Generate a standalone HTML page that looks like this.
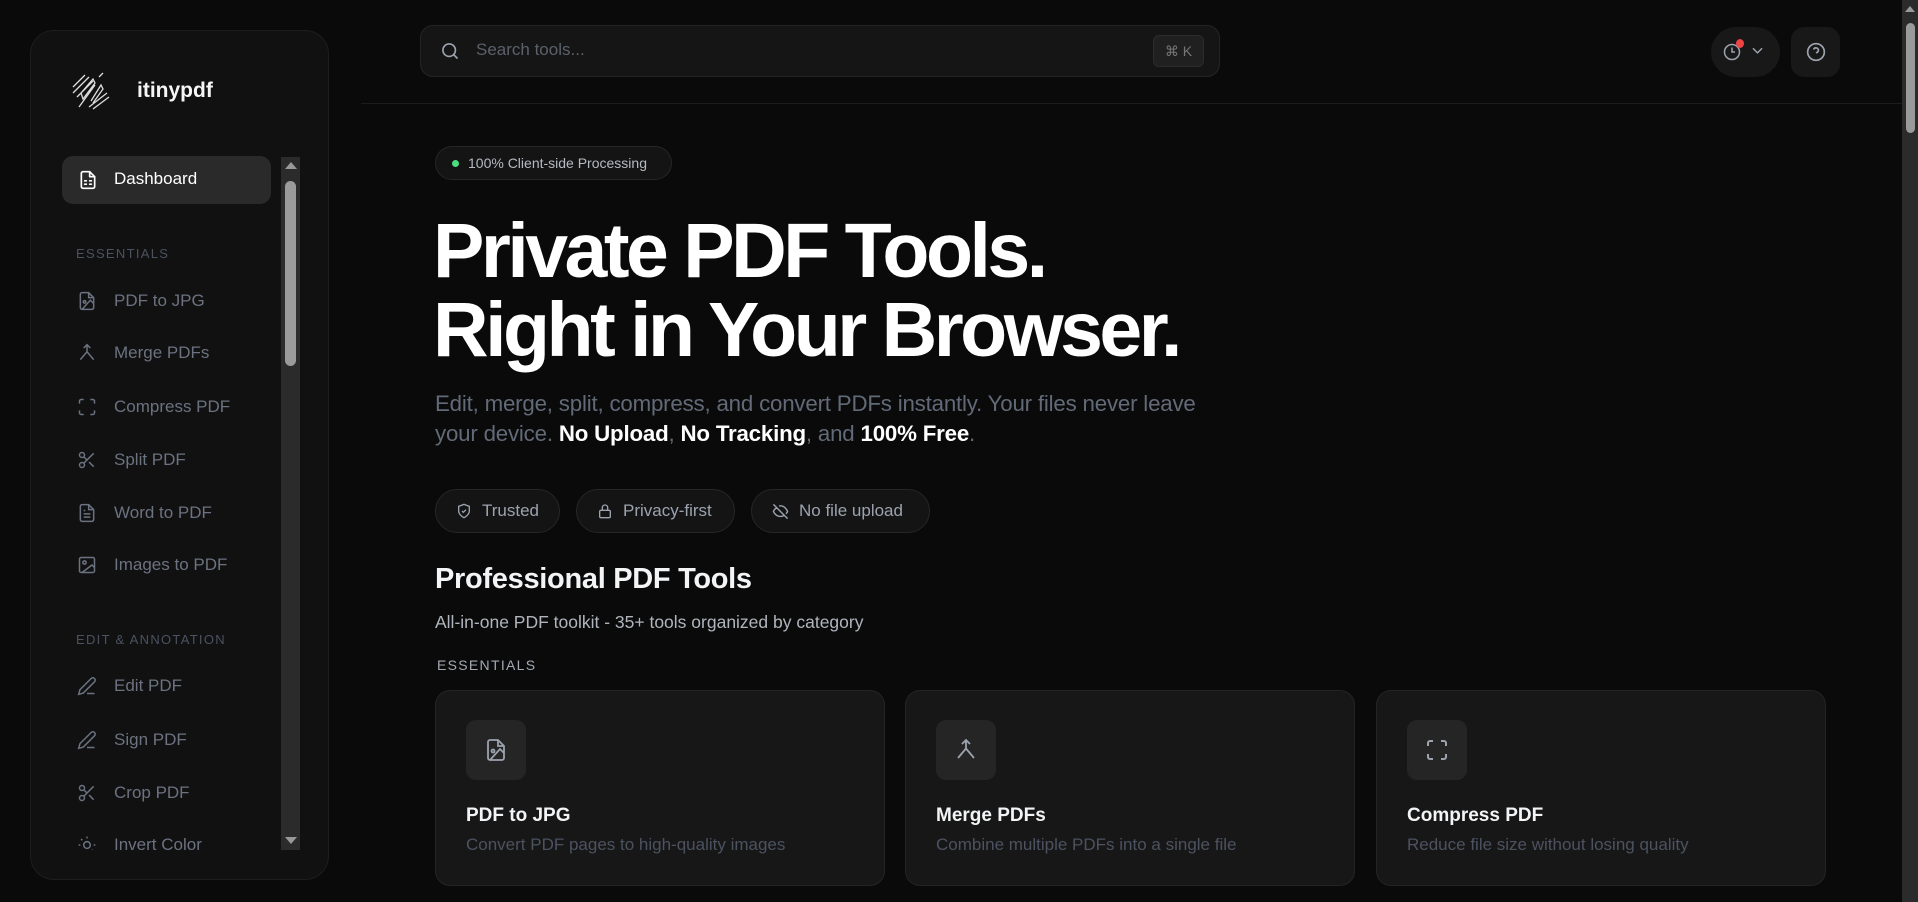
<!DOCTYPE html>
<html><head><meta charset="utf-8"><style>
*{box-sizing:border-box;margin:0;padding:0}
body{width:1918px;height:902px;overflow:hidden;background:#0a0a0a;font-family:"Liberation Sans",sans-serif;position:relative;color:#fff}
.abs{position:absolute}
svg{display:block}
.side{left:30px;top:30px;width:299px;height:850px;background:#111;border:1px solid #1e1e1e;border-radius:24px;overflow:hidden}
.nav{position:absolute;left:77px;font-size:17px;color:#6b7280;display:flex;align-items:center;gap:17px;height:24px}
.nav svg{width:20px;height:20px}
.lbl{position:absolute;left:76px;font-size:13px;letter-spacing:1.3px;color:#4b5260}
.chip{position:absolute;top:489px;height:44px;border:1px solid #262626;background:#141414;border-radius:22px;display:flex;align-items:center;gap:10px;padding:0 20px;font-size:17px;color:#9ca3af}
.card{position:absolute;top:690px;width:450px;height:196px;background:#171717;border:1px solid #242424;border-radius:15px}
.card .ib{position:absolute;left:30px;top:29px;width:60px;height:60px;background:#252525;border-radius:10px;display:flex;align-items:center;justify-content:center}
.card .t{position:absolute;left:30px;top:114px;font-size:19px;font-weight:bold;color:#f3f4f6}
.card .d{position:absolute;left:30px;top:144px;font-size:17px;color:#4b5260}
</style></head><body>

<div class="abs side">
  <svg class="abs" style="left:40px;top:40px" width="40" height="40" viewBox="0 0 40 40" fill="none" stroke="#ddd" stroke-width="1.3">
    <path d="M2 16L14 4M2 22L18 6M6 26L22 10M8 36L24 14M10 22L22 8L24 12L12 28ZM20 30L30 14L32 18L22 32M18 36L36 22M22 38L38 26M28 6L32 2"/>
  </svg>
  <div class="abs" style="left:106px;top:48px;font-size:21px;font-weight:bold;color:#f5f5f5">itinypdf</div>
  <div class="abs" style="left:31px;top:125px;width:209px;height:48px;background:#2a2a2a;border-radius:11px"></div>
  <svg class="abs" style="left:47px;top:139px" width="20" height="20" viewBox="0 0 24 24" fill="none" stroke="#fff" stroke-width="2" stroke-linecap="round" stroke-linejoin="round"><path d="M14 2H6a2 2 0 0 0-2 2v16a2 2 0 0 0 2 2h12a2 2 0 0 0 2-2V8z"/><path d="M14 2v6h6M8 13h2M14 13h2M8 17h2M14 17h2"/></svg>
  <div class="abs" style="left:83px;top:138px;font-size:17px;color:#fff">Dashboard</div>
  <div class="abs" style="left:250px;top:126px;width:19px;height:693px;background:#2b2b2b"></div>
  <div class="abs" style="left:254px;top:131px;width:0;height:0;border-left:6px solid transparent;border-right:6px solid transparent;border-bottom:7px solid #999"></div>
  <div class="abs" style="left:254px;top:150px;width:11px;height:185px;background:#9a9a9a;border-radius:6px"></div>
  <div class="abs" style="left:254px;top:806px;width:0;height:0;border-left:6px solid transparent;border-right:6px solid transparent;border-top:7px solid #999"></div>
</div>

<div class="lbl" style="top:246px">ESSENTIALS</div>
<div class="nav" style="top:289px"><svg viewBox="0 0 24 24" fill="none" stroke="#6b7280" stroke-width="1.8"><path d="M14 2H6a2 2 0 0 0-2 2v16a2 2 0 0 0 2 2h12a2 2 0 0 0 2-2V8z"/><path d="M14 2v6h6"/><circle cx="9" cy="13" r="1.5"/><path d="M20 15l-4-4-10 11"/></svg>PDF to JPG</div>
<div class="nav" style="top:341px"><svg viewBox="0 0 24 24" fill="none" stroke="#6b7280" stroke-width="1.8"><path d="M8 6l4-4 4 4M12 2v8.5L4 20M12 10.5L20 20"/></svg>Merge PDFs</div>
<div class="nav" style="top:395px"><svg viewBox="0 0 24 24" fill="none" stroke="#6b7280" stroke-width="1.8"><path d="M3 8V5a2 2 0 0 1 2-2h3M16 3h3a2 2 0 0 1 2 2v3M21 16v3a2 2 0 0 1-2 2h-3M8 21H5a2 2 0 0 1-2-2v-3"/></svg>Compress PDF</div>
<div class="nav" style="top:448px"><svg viewBox="0 0 24 24" fill="none" stroke="#6b7280" stroke-width="1.8"><circle cx="6" cy="6" r="3"/><circle cx="6" cy="18" r="3"/><path d="M20 4L8.1 15.9M14.5 14.5L20 20M8.1 8.1L12 12"/></svg>Split PDF</div>
<div class="nav" style="top:501px"><svg viewBox="0 0 24 24" fill="none" stroke="#6b7280" stroke-width="1.8"><path d="M14 2H6a2 2 0 0 0-2 2v16a2 2 0 0 0 2 2h12a2 2 0 0 0 2-2V8z"/><path d="M14 2v6h6M16 13H8M16 17H8M10 9H8"/></svg>Word to PDF</div>
<div class="nav" style="top:553px"><svg viewBox="0 0 24 24" fill="none" stroke="#6b7280" stroke-width="1.8"><rect x="3" y="3" width="18" height="18" rx="2"/><circle cx="9" cy="9" r="2"/><path d="M21 15l-3-3L6 21"/></svg>Images to PDF</div>
<div class="lbl" style="top:632px">EDIT &amp; ANNOTATION</div>
<div class="nav" style="top:674px"><svg viewBox="0 0 24 24" fill="none" stroke="#6b7280" stroke-width="1.8"><path d="M17 3a2.8 2.8 0 1 1 4 4L7.5 20.5 2 22l1.5-5.5z M12 21h9"/></svg>Edit PDF</div>
<div class="nav" style="top:728px"><svg viewBox="0 0 24 24" fill="none" stroke="#6b7280" stroke-width="1.8"><path d="M17 3a2.8 2.8 0 1 1 4 4L7.5 20.5 2 22l1.5-5.5z M12 21h9"/></svg>Sign PDF</div>
<div class="nav" style="top:781px"><svg viewBox="0 0 24 24" fill="none" stroke="#6b7280" stroke-width="1.8"><circle cx="6" cy="6" r="3"/><circle cx="6" cy="18" r="3"/><path d="M20 4L8.1 15.9M14.5 14.5L20 20M8.1 8.1L12 12"/></svg>Crop PDF</div>
<div style="position:absolute;left:60px;top:830px;width:220px;height:20px;overflow:hidden"><div class="nav" style="left:17px;top:3px"><svg viewBox="0 0 24 24" fill="none" stroke="#6b7280" stroke-width="1.8"><circle cx="12" cy="12" r="4"/><path d="M12 2v2M12 20v2M4.9 4.9l1.4 1.4M17.7 17.7l1.4 1.4M2 12h2M20 12h2"/></svg>Invert Color</div></div>

<!-- header -->
<div class="abs" style="left:361px;top:103px;width:1541px;height:1px;background:#1c1c1c"></div>
<div class="abs" style="left:420px;top:25px;width:800px;height:52px;background:#151515;border:1px solid #242424;border-radius:13px"></div>
<svg class="abs" style="left:440px;top:41px" width="20" height="20" viewBox="0 0 24 24" fill="none" stroke="#9ca3af" stroke-width="2"><circle cx="11" cy="11" r="7.5"/><path d="M21 21l-4.5-4.5"/></svg>
<div class="abs" style="left:476px;top:40px;font-size:17px;color:#5b616b">Search tools...</div>
<div class="abs" style="left:1153px;top:35px;width:51px;height:32px;background:#202020;border:1px solid #2c2c2c;border-radius:6px;font-size:14px;color:#777;display:flex;align-items:center;justify-content:center">⌘ K</div>
<div class="abs" style="left:1711px;top:27px;width:69px;height:50px;background:#181818;border-radius:25px"></div>
<svg class="abs" style="left:1723px;top:43px" width="18" height="18" viewBox="0 0 24 24" fill="none" stroke="#9ca3af" stroke-width="2"><circle cx="12" cy="12" r="10"/><path d="M12 6v6h4"/></svg>
<div class="abs" style="left:1736px;top:39px;width:8px;height:9px;border-radius:50%;background:#ef4444"></div>
<svg class="abs" style="left:1752px;top:47px" width="11" height="8" viewBox="0 0 12 8" fill="none" stroke="#9ca3af" stroke-width="1.6"><path d="M1 1l5 5 5-5"/></svg>
<div class="abs" style="left:1791px;top:27px;width:49px;height:50px;background:#181818;border-radius:13px"></div>
<svg class="abs" style="left:1806px;top:42px" width="20" height="20" viewBox="0 0 24 24" fill="none" stroke="#9ca3af" stroke-width="2"><circle cx="12" cy="12" r="10"/><path d="M9.1 9a3 3 0 0 1 5.8 1c0 2-3 3-3 3M12 17h.01"/></svg>
<div class="abs" style="left:1902px;top:0;width:16px;height:902px;background:#2b2b2b"></div>
<div class="abs" style="left:1905px;top:6px;width:0;height:0;border-left:5px solid transparent;border-right:5px solid transparent;border-bottom:6px solid #999"></div>
<div class="abs" style="left:1906px;top:23px;width:9px;height:110px;background:#9a9a9a;border-radius:5px"></div>

<!-- hero -->
<div class="abs" style="left:435px;top:146px;width:237px;height:34px;border:1px solid #262626;background:#141414;border-radius:17px;display:flex;align-items:center;padding-left:16px;gap:9px;font-size:14px;color:#b5bac2"><span style="width:7px;height:7px;border-radius:50%;background:#4ade80"></span>100% Client-side Processing</div>
<div class="abs" style="left:433px;top:212px;font-size:77px;font-weight:bold;line-height:79px;letter-spacing:-3.5px;color:#fff">Private PDF Tools.<br>Right in Your Browser.</div>
<div class="abs" style="left:435px;top:389px;font-size:22.3px;line-height:30px;color:#626a78;letter-spacing:-0.2px">Edit, merge, split, compress, and convert PDFs instantly. Your files never leave<br>your device. <b style="color:#fff">No Upload</b>, <b style="color:#fff">No Tracking</b>, and <b style="color:#fff">100% Free</b>.</div>
<div class="chip" style="left:435px;width:125px"><svg width="16" height="16" viewBox="0 0 24 24" fill="none" stroke="#9ca3af" stroke-width="2"><path d="M12 22s8-4 8-10V5l-8-3-8 3v7c0 6 8 10 8 10z"/><path d="M9 12l2 2 4-4"/></svg>Trusted</div>
<div class="chip" style="left:576px;width:159px"><svg width="16" height="16" viewBox="0 0 24 24" fill="none" stroke="#9ca3af" stroke-width="2"><rect x="4" y="11" width="16" height="11" rx="2"/><path d="M8 11V7a4 4 0 0 1 8 0v4"/></svg>Privacy-first</div>
<div class="chip" style="left:751px;width:179px"><svg width="17" height="17" viewBox="0 0 24 24" fill="none" stroke="#9ca3af" stroke-width="2"><path d="M2 2l20 20M6.7 6.7A10 10 0 0 0 2 12s3 7 10 7c1.9 0 3.6-.5 5-1.3M10 4.2A10 10 0 0 1 12 4c7 0 10 8 10 8a17 17 0 0 1-2.2 3.3"/></svg>No file upload</div>

<div class="abs" style="left:435px;top:563px;font-size:29px;font-weight:bold;color:#f3f4f6;letter-spacing:-0.3px">Professional PDF Tools</div>
<div class="abs" style="left:435px;top:612px;font-size:17.5px;color:#b0b5bd">All-in-one PDF toolkit - 35+ tools organized by category</div>
<div class="abs" style="left:437px;top:657px;font-size:14px;letter-spacing:1.3px;color:#a3a9b2">ESSENTIALS</div>

<div class="card" style="left:435px"><div class="ib"><svg width="24" height="24" viewBox="0 0 24 24" fill="none" stroke="#9ca3af" stroke-width="1.8"><path d="M14 2H6a2 2 0 0 0-2 2v16a2 2 0 0 0 2 2h12a2 2 0 0 0 2-2V8z"/><path d="M14 2v6h6"/><circle cx="9" cy="13" r="1.5"/><path d="M20 15l-4-4-10 11"/></svg></div><div class="t">PDF to JPG</div><div class="d">Convert PDF pages to high-quality images</div></div>
<div class="card" style="left:905px"><div class="ib"><svg width="24" height="24" viewBox="0 0 24 24" fill="none" stroke="#9ca3af" stroke-width="1.8"><path d="M8 6l4-4 4 4M12 2v8.5L4 20M12 10.5L20 20"/></svg></div><div class="t">Merge PDFs</div><div class="d">Combine multiple PDFs into a single file</div></div>
<div class="card" style="left:1376px"><div class="ib"><svg width="24" height="24" viewBox="0 0 24 24" fill="none" stroke="#9ca3af" stroke-width="2"><path d="M3 8V5a2 2 0 0 1 2-2h3M16 3h3a2 2 0 0 1 2 2v3M21 16v3a2 2 0 0 1-2 2h-3M8 21H5a2 2 0 0 1-2-2v-3"/></svg></div><div class="t">Compress PDF</div><div class="d">Reduce file size without losing quality</div></div>
</body></html>
